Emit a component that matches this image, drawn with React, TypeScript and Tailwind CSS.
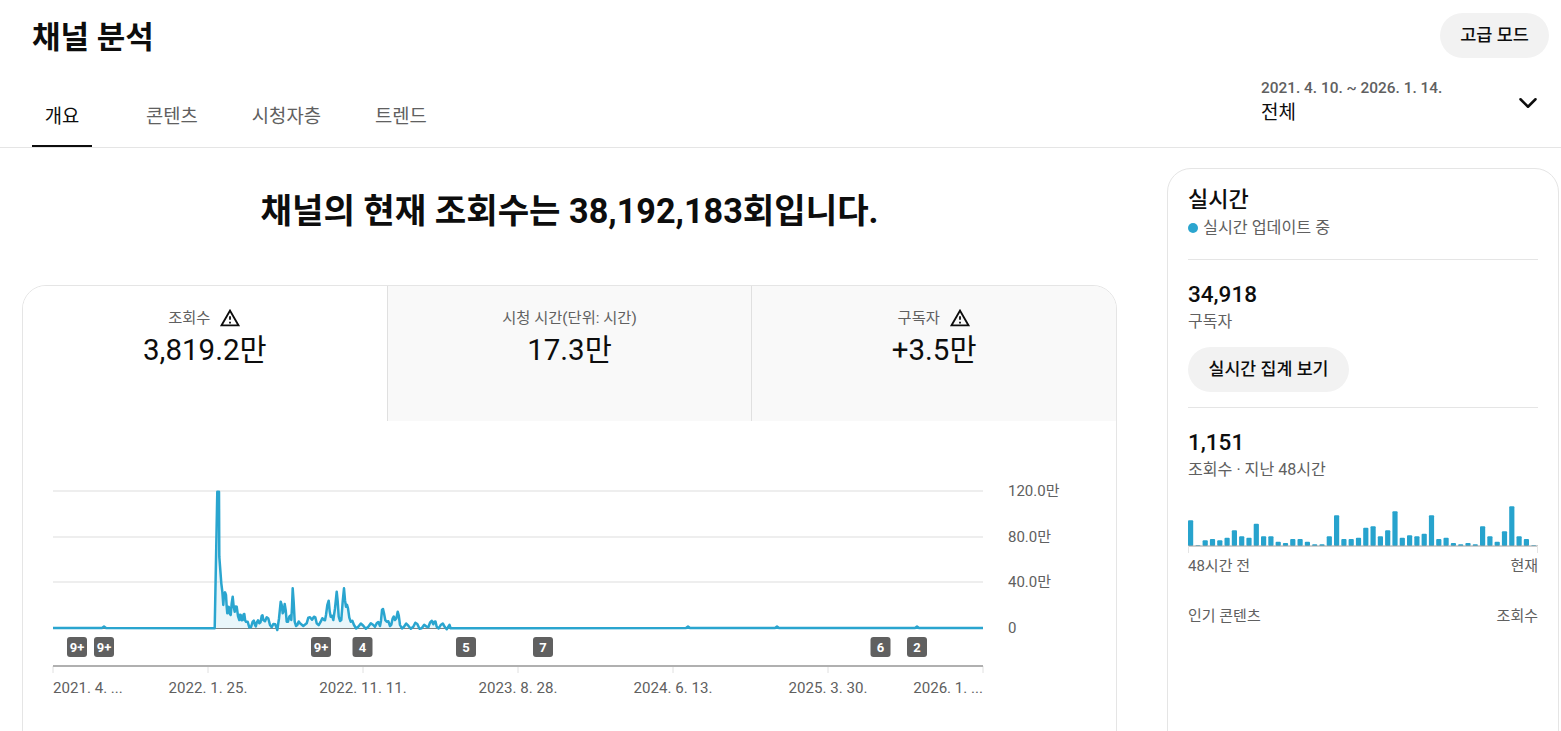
import { ChevronDown } from "lucide-react";

const font = "font-['Roboto','Noto_Sans_CJK_KR',sans-serif]";

// peaks traced from the chart, in page pixels * 3 relative to x=200, y=480
const traced = [
  [44, 445], [52, 35], [57, 35], [58, 230], [64, 310], [70, 375], [72, 345], [78, 345], [82, 400], [86, 380],
  [92, 405], [98, 350], [104, 395], [110, 380], [118, 420], [122, 405], [128, 420], [133, 402], [138, 425],
  [148, 442], [158, 425], [165, 435], [170, 428], [178, 430], [185, 408], [190, 420], [200, 412], [210, 435],
  [220, 432], [232, 450], [242, 365], [248, 400], [254, 372], [260, 425], [268, 410], [274, 420], [278, 325],
  [284, 425], [292, 435], [300, 430], [320, 430], [330, 412], [342, 410], [350, 430], [362, 425], [372, 420],
  [378, 405], [386, 362], [392, 410], [400, 420], [410, 335], [416, 410], [424, 420], [432, 325], [438, 380],
  [444, 385], [452, 425], [462, 435], [475, 440], [490, 437], [505, 440], [520, 435], [530, 430], [540, 438],
  [546, 390], [552, 400], [560, 425], [570, 438], [578, 415], [585, 420], [593, 395], [600, 435], [612, 440],
  [625, 437], [640, 440], [652, 432], [665, 445], [680, 440], [690, 428], [700, 433], [703, 425], [710, 440],
  [722, 435], [735, 442], [745, 440], [752, 445],
];

// the daily data is noisy: add a small zigzag between the traced points
const spike = traced.flatMap(([x, y], i) => {
  const point = `${(200 + x / 3).toFixed(1)},${(480 + y / 3).toFixed(1)}`;
  const next = traced[i + 1];
  if (!next || i < 4 || next[0] - x < 4) return [point];
  const midY = Math.min((y + next[1]) / 2 + (i % 2 ? 8 : -8), 448);
  return [point, `${(200 + (x + next[0]) / 6).toFixed(1)},${(480 + midY / 3).toFixed(1)}`];
});

const linePoints = [
  "53,628", "102,628", "104,626.6", "106,628", ...spike,
  "686,628", "688,626.6", "690,628", "775,628", "777,626.6", "779,628", "915,628", "917,626.6", "919,628", "983,628",
].join(" ");

const gridLines = [491, 537, 582];
const axisTicks = [53, 208, 363, 518, 673, 828, 983];
const yLabels = [
  { y: 491, label: "120.0만" },
  { y: 537, label: "80.0만" },
  { y: 582, label: "40.0만" },
  { y: 628, label: "0" },
];
const xLabels = [
  { x: 53, label: "2021. 4. ...", anchor: "start" },
  { x: 208, label: "2022. 1. 25.", anchor: "middle" },
  { x: 363, label: "2022. 11. 11.", anchor: "middle" },
  { x: 518, label: "2023. 8. 28.", anchor: "middle" },
  { x: 673, label: "2024. 6. 13.", anchor: "middle" },
  { x: 828, label: "2025. 3. 30.", anchor: "middle" },
  { x: 983, label: "2026. 1. ...", anchor: "end" },
];
const badges = [
  { x: 77, label: "9+" },
  { x: 104, label: "9+" },
  { x: 321, label: "9+" },
  { x: 362.5, label: "4" },
  { x: 466, label: "5" },
  { x: 543, label: "7" },
  { x: 880.5, label: "6" },
  { x: 917, label: "2" },
];

// bar tops read off the 48 hour chart, same 3x scale
const barTops = [
  90, 165, 150, 146, 150, 142, 120, 138, 142, 100, 138, 138, 154, 158, 146, 146, 154, 162, 162, 138, 75, 146, 146, 142,
  112, 108, 138, 120, 63, 142, 135, 138, 130, 75, 146, 142, 158, 162, 158, 162, 108, 138, 154, 123, 48, 138, 146, 165,
];

function WarningIcon() {
  return (
    <svg viewBox="0 0 24 24" className="h-[22px] w-[22px] fill-[#0d0d0d]">
      <path d="M1 21h22L12 2 1 21zm3.47-2L12 5.99 19.53 19H4.47zM11 16h2v2h-2zm0-6h2v4h-2z" />
    </svg>
  );
}

function MetricTab({ label, value, warn, active }: { label: string; value: string; warn?: boolean; active?: boolean }) {
  return (
    <div className={`flex flex-1 flex-col items-center pt-[20px] ${active ? "bg-white" : "bg-[#f9f9f9]"}`}>
      <div className="flex h-6 items-center gap-[9px] text-[15.3px] text-[#606060]">
        <span>{label}</span>
        {warn && <WarningIcon />}
      </div>
      <div className="text-[29.5px] leading-[40px] text-[#0d0d0d]">{value}</div>
    </div>
  );
}

function OverviewChart() {
  return (
    <svg viewBox="23 421 1093 330" className="block h-[330px] w-[1093px]">
      {gridLines.map((y) => (
        <line key={y} x1={53} x2={983} y1={y} y2={y} stroke="#e8e8e8" strokeWidth={1.5} />
      ))}
      <polygon points={`${linePoints} 983,628 53,628`} fill="#2ba5cf" fillOpacity={0.1} />
      <line x1={53} x2={983} y1={628.5} y2={628.5} stroke="#808080" strokeWidth={1} />
      <polyline points={linePoints} fill="none" stroke="#2aa5cf" strokeWidth={2.5} strokeLinejoin="round" />
      {yLabels.map((t) => (
        <text key={t.label} x={1008} y={t.y + 5} fontSize={15} fill="#606060">
          {t.label}
        </text>
      ))}
      {badges.map((b, i) => (
        <g key={i}>
          <rect x={b.x - 10} y={637} width={20} height={20} rx={3} fill="#606060" />
          <text x={b.x} y={652} fontSize={13} fontWeight={700} fill="#fff" textAnchor="middle">
            {b.label}
          </text>
        </g>
      ))}
      {axisTicks.map((x) => (
        <line key={x} x1={x} x2={x} y1={666} y2={673} stroke="#e0e0e0" strokeWidth={1} />
      ))}
      <line x1={53} x2={983} y1={666} y2={666} stroke="#b0b0b0" strokeWidth={2} />
      {xLabels.map((t) => (
        <text
          key={t.label}
          x={t.x}
          y={692.5}
          fontSize={15.1}
          fill="#606060"
          textAnchor={t.anchor as "start" | "middle" | "end"}
        >
          {t.label}
        </text>
      ))}
    </svg>
  );
}

function RealtimeBars() {
  return (
    <svg viewBox="0 0 350 55" className="block h-[55px] w-[350px]">
      {barTops.map((top, i) => {
        const h = (167 - top) / 3;
        return <rect key={i} x={i * 7.3} y={47 - h} width={5.2} height={h} rx={1} fill="#27a3cd" />;
      })}
      <line x1={0} x2={350} y1={47} y2={47} stroke="#9e9e9e" strokeWidth={1} />
      <line x1={0.5} x2={0.5} y1={47} y2={54} stroke="#e5e5e5" strokeWidth={1} />
      <line x1={349.5} x2={349.5} y1={47} y2={54} stroke="#e5e5e5" strokeWidth={1} />
    </svg>
  );
}

function Sidebar() {
  return (
    <aside className="ml-[50px] h-[700px] w-[392px] shrink-0 rounded-t-[24px] border border-[#e5e5e5] px-5 pt-[17px]">
      <h2 className="text-[22px] leading-7 font-medium text-[#0d0d0d]">실시간</h2>
      <div className="mt-1 flex h-5 items-center text-[16.2px] text-[#606060]">
        <span className="mr-[5px] h-[10px] w-[10px] rounded-full bg-[#2ba5cf]" />
        실시간 업데이트 중
      </div>
      <div className="mt-[21px] w-[350px] border-t border-[#e5e5e5]" />
      <div className="mt-[20px] text-[22.5px] leading-7 font-medium text-[#0d0d0d]">34,918</div>
      <div className="mt-[4px] text-[16px] leading-5 text-[#606060]">구독자</div>
      <button className="mt-[15px] block h-[45px] w-[161px] rounded-full bg-[#f2f2f2] text-[17.3px] font-medium text-[#0d0d0d]">
        실시간 집계 보기
      </button>
      <div className="mt-[15px] w-[350px] border-t border-[#e5e5e5]" />
      <div className="mt-[20px] text-[22.5px] leading-7 font-medium text-[#0d0d0d]">1,151</div>
      <div className="mt-[4px] text-[16.1px] leading-5 text-[#606060]">조회수 · 지난 48시간</div>
      <div className="mt-[19px]">
        <RealtimeBars />
      </div>
      <div className="mt-[2px] flex w-[350px] justify-between text-[15px] leading-5 text-[#606060]">
        <span>48시간 전</span>
        <span>현재</span>
      </div>
      <div className="mt-[30px] flex w-[350px] justify-between text-[15px] leading-5 text-[#606060]">
        <span>인기 콘텐츠</span>
        <span>조회수</span>
      </div>
    </aside>
  );
}

export default function App() {
  return (
    <div className={`h-[731px] overflow-hidden bg-white ${font}`}>
      <header className="h-[148px] border-b border-[#e5e5e5]">
        <div className="flex items-start justify-between pt-[15px] pr-3 pl-8">
          <h1 className="text-[31px] leading-[46px] font-bold text-[#0d0d0d]">채널 분석</h1>
          <button className="-mt-[2px] h-[45px] w-[109px] rounded-full bg-[#f2f2f2] text-[17.5px] font-medium text-[#0d0d0d]">
            고급 모드
          </button>
        </div>
        <div className="mt-[12px] flex h-[74px] justify-between pl-8">
          <nav className="flex items-end gap-[54px] text-[18.8px] text-[#606060]">
            <div className="flex h-[62px] w-[60px] items-center justify-center border-b-2 border-[#0d0d0d] pt-[4px] text-[#0d0d0d]">
              개요
            </div>
            <div className="flex h-[62px] items-center pt-[2px]">콘텐츠</div>
            <div className="flex h-[62px] items-center pt-[2px]">시청자층</div>
            <div className="flex h-[62px] items-center pt-[2px]">트렌드</div>
          </nav>
          <div className="flex w-[300px] items-start pt-[5px]">
            <div className="w-[252px]">
              <div className="text-[15.4px] leading-5 font-medium text-[#606060]">2021. 4. 10. ~ 2026. 1. 14.</div>
              <div className="mt-[3px] text-[19px] leading-6 text-[#0d0d0d]">전체</div>
            </div>
            <ChevronDown className="mt-[10px] h-[30px] w-[30px] text-[#0d0d0d]" strokeWidth={2} />
          </div>
        </div>
      </header>

      <div className="flex pt-5 pl-[22px]">
        <main className="w-[1095px] shrink-0">
          <h2 className="h-[117px] pt-[22px] text-center text-[34.2px] leading-[42px] font-bold text-[#0d0d0d]">
            채널의 현재 조회수는 38,192,183회입니다.
          </h2>
          <div className="overflow-hidden rounded-t-[24px] border border-[#e5e5e5]">
            <div className="flex h-[135px] divide-x divide-[#e0e0e0]">
              <MetricTab label="조회수" value="3,819.2만" warn active />
              <MetricTab label="시청 시간(단위: 시간)" value="17.3만" />
              <MetricTab label="구독자" value="+3.5만" warn />
            </div>
            <OverviewChart />
          </div>
        </main>
        <Sidebar />
      </div>
    </div>
  );
}
